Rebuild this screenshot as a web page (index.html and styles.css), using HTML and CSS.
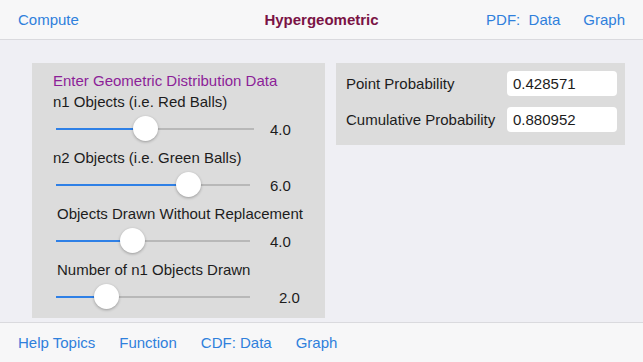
FILE: index.html
```html
<!DOCTYPE html>
<html lang="en">
<head>
    <meta charset="UTF-8">
    <meta name="viewport" content="width=device-width, initial-scale=1.0">
    <title>Hypergeometric</title>
    <link rel="stylesheet" href="styles.css">
</head>
<body>
    <div class="topbar">
        <span class="link">Compute</span>
        <span class="title">Hypergeometric</span>
        <div class="right-links">
            <span class="link">PDF:&nbsp; Data</span>
            <span class="link">Graph</span>
        </div>
    </div>
    <div class="main">
        <div class="panel inputs">
            <div class="heading">Enter Geometric Distribution Data</div>
            <div class="group">
                <div class="label">n1 Objects (i.e. Red Balls)</div>
                <div class="slider-row">
                    <div class="track wide">
                        <div class="fill" style="width: 45%"></div>
                        <div class="thumb" style="left: 45%"></div>
                    </div>
                    <span class="value">4.0</span>
                </div>
            </div>
            <div class="group">
                <div class="label">n2 Objects (i.e. Green Balls)</div>
                <div class="slider-row">
                    <div class="track">
                        <div class="fill" style="width: 68%"></div>
                        <div class="thumb" style="left: 68%"></div>
                    </div>
                    <span class="value">6.0</span>
                </div>
            </div>
            <div class="group">
                <div class="label indent">Objects Drawn Without Replacement</div>
                <div class="slider-row">
                    <div class="track">
                        <div class="fill" style="width: 39%"></div>
                        <div class="thumb" style="left: 39%"></div>
                    </div>
                    <span class="value">4.0</span>
                </div>
            </div>
            <div class="group">
                <div class="label indent">Number of n1 Objects Drawn</div>
                <div class="slider-row">
                    <div class="track">
                        <div class="fill" style="width: 26%"></div>
                        <div class="thumb" style="left: 26%"></div>
                    </div>
                    <span class="value far">2.0</span>
                </div>
            </div>
        </div>
        <div class="panel results">
            <div class="result-row">
                <span>Point Probability</span>
                <input type="text" value="0.428571" readonly>
            </div>
            <div class="result-row">
                <span>Cumulative Probability</span>
                <input type="text" value="0.880952" readonly>
            </div>
        </div>
    </div>
    <div class="bottombar">
        <span class="link">Help Topics</span>
        <span class="link">Function</span>
        <span class="link">CDF: Data</span>
        <span class="link">Graph</span>
    </div>
</body>
</html>
```

FILE: styles.css
```css
body {
    margin: 0;
    width: 643px;
    height: 362px;
    display: flex;
    flex-direction: column;
    background-color: #efeff4;
    font-family: "Liberation Sans", Arial, sans-serif;
    font-size: 15px;
    color: #1c1c1c;
    overflow: hidden;
}
.link {
    color: #2f80dc;
}
.topbar {
    height: 39px;
    border-bottom: 1px solid #dadade;
    background-color: #f7f7f8;
    display: flex;
    align-items: center;
    padding: 0 18px;
    position: relative;
}
.topbar .title {
    position: absolute;
    left: 0;
    right: 0;
    text-align: center;
    font-weight: bold;
    color: #7a1345;
    pointer-events: none;
}
.right-links {
    margin-left: auto;
    display: flex;
    gap: 23px;
}
.main {
    flex: 1;
    display: flex;
    align-items: flex-start;
    gap: 11px;
    padding: 23px 0 0 32px;
}
.panel {
    background-color: #dcdcdc;
}
.inputs {
    width: 272px;
    height: 247px;
    padding: 8px 0 0 21px;
}
.heading {
    color: #8c1f98;
    line-height: 20px;
}
.label {
    line-height: 22px;
}
.label.indent {
    padding-left: 4px;
}
.group {
    margin-bottom: 2px;
}
.slider-row {
    height: 32px;
    display: flex;
    align-items: center;
    padding-left: 3px;
}
.track {
    position: relative;
    width: 194px;
    height: 2px;
    background-color: #b8b8b8;
}
.track.wide {
    width: 198px;
}
.fill {
    height: 100%;
    background-color: #2f80e6;
}
.thumb {
    position: absolute;
    top: -12px;
    width: 25px;
    height: 25px;
    margin-left: -12px;
    border-radius: 50%;
    background-color: #fff;
    box-shadow: 0 1px 3px rgba(0, 0, 0, 0.3);
}
.value {
    margin-left: 20px;
}
.track.wide + .value {
    margin-left: 16px;
}
.value.far {
    margin-left: 29px;
}
.results {
    width: 271px;
    padding: 8px 8px 13px 10px;
    display: flex;
    flex-direction: column;
    gap: 11px;
}
.result-row {
    display: flex;
    align-items: center;
    justify-content: space-between;
}
.result-row input {
    width: 110px;
    height: 25px;
    box-sizing: border-box;
    border: none;
    border-radius: 4px;
    background-color: #fff;
    padding: 0 6px;
    font-family: inherit;
    font-size: 15px;
    color: #1c1c1c;
}
.bottombar {
    height: 39px;
    border-top: 1px solid #dadade;
    background-color: #f7f7f8;
    display: flex;
    align-items: center;
    gap: 24px;
    padding: 0 18px;
}
```
